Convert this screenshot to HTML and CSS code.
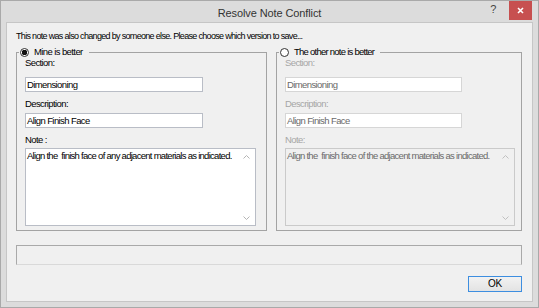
FILE: index.html
```html
<!DOCTYPE html>
<html>
<head>
<meta charset="utf-8">
<title>Resolve Note Conflict</title>
<link rel="stylesheet" href="styles.css">
</head>
<body>
<div class="window">
  <div class="titlebar">
    <div class="spacer"></div>
    <div class="title">Resolve Note Conflict</div>
    <div class="caption-btns">
      <span class="help">?</span>
      <span class="close"><svg width="7" height="7" viewBox="0 0 7 7"><path d="M1 1L6 6M6 1L1 6" stroke="#fff" stroke-width="1.6" fill="none"/></svg></span>
    </div>
  </div>
  <div class="client">
    <p class="intro">This note was also changed by someone else. Please choose which version to save...</p>
    <div class="versions">
      <fieldset class="group mine">
        <legend><span class="radio checked"></span>Mine is better</legend>
        <div class="group-body">
          <div class="label first">Section:</div>
          <div class="field first">Dimensioning</div>
          <div class="label">Description:</div>
          <div class="field">Align Finish Face</div>
          <div class="label">Note :</div>
          <div class="memo">
            <div class="memo-text">Align the  finish face of any adjacent materials as indicated.</div>
            <div class="scroll">
              <svg width="7" height="4" viewBox="0 0 7 4"><path d="M0.5 3.5L3.5 0.5L6.5 3.5" stroke="#b4b4b4" fill="none"/></svg>
              <svg width="7" height="4" viewBox="0 0 7 4"><path d="M0.5 0.5L3.5 3.5L6.5 0.5" stroke="#b4b4b4" fill="none"/></svg>
            </div>
          </div>
        </div>
      </fieldset>
      <fieldset class="group theirs">
        <legend><span class="radio"></span>The other note is better</legend>
        <div class="group-body">
          <div class="label first">Section:</div>
          <div class="field first">Dimensioning</div>
          <div class="label">Description:</div>
          <div class="field">Align Finish Face</div>
          <div class="label">Note:</div>
          <div class="memo">
            <div class="memo-text">Align the  finish face of the adjacent materials as indicated.</div>
            <div class="scroll">
              <svg width="7" height="4" viewBox="0 0 7 4"><path d="M0.5 3.5L3.5 0.5L6.5 3.5" stroke="#c0c0c0" fill="none"/></svg>
              <svg width="7" height="4" viewBox="0 0 7 4"><path d="M0.5 0.5L3.5 3.5L6.5 0.5" stroke="#c0c0c0" fill="none"/></svg>
            </div>
          </div>
        </div>
      </fieldset>
    </div>
    <div class="status"></div>
    <div class="actions"><button class="ok">OK</button></div>
  </div>
</div>
</body>
</html>
```

FILE: styles.css
```css
html, body {
  margin: 0;
  padding: 0;
  background: #ffffff;
}

body {
  font-family: "Liberation Sans", Arial, sans-serif;
  font-size: 9.5px;
  letter-spacing: -0.6px;
  color: #000;
}

.window {
  width: 539px;
  height: 308px;
  box-sizing: border-box;
  border: 1px solid #a9a9a9;
  background: #dcdcdc;
  display: flex;
  flex-direction: column;
}

.titlebar {
  height: 21px;
  display: grid;
  grid-template-columns: 1fr auto 1fr;
  align-items: start;
}

.title {
  padding-top: 5px;
  font-size: 11px;
  line-height: 15px;
  letter-spacing: -0.1px;
  color: #333;
}

.caption-btns {
  justify-self: end;
  display: flex;
  align-items: flex-start;
  margin-right: 6px;
}

.help {
  width: 16px;
  margin-right: 8px;
  padding-top: 1px;
  font-size: 11px;
  line-height: 15px;
  text-align: center;
  color: #444;
}

.close {
  width: 23px;
  height: 19px;
  background: #c75050;
  display: flex;
  align-items: center;
  justify-content: center;
}

.client {
  flex: 1;
  margin: 0 5px 5px 5px;
  border: 1px solid #c6c6c6;
  background: #f0f0f0;
  padding: 7px 10px 0 9px;
  display: flex;
  flex-direction: column;
}

.intro {
  margin: 0;
  font-size: 9px;
  letter-spacing: -0.68px;
  line-height: 12px;
}

.versions {
  margin-top: 5px;
  display: flex;
  gap: 9px;
}

.group {
  margin: 0;
  padding: 0;
  border: 1px solid #a3a3a3;
  min-width: 0;
  box-sizing: border-box;
}

.group.mine { width: 251px; }
.group.theirs { width: 246px; }

.group legend {
  margin-left: 2px;
  padding: 0 6px 0 1px;
  line-height: 10px;
  display: flex;
  align-items: center;
}

.theirs legend {
  letter-spacing: -0.75px;
}

.radio {
  width: 9px;
  height: 9px;
  box-sizing: border-box;
  border: 1px solid #333;
  border-radius: 50%;
  background: #fff;
  margin-right: 5px;
  display: inline-block;
}

.radio.checked {
  background: radial-gradient(circle, #111 0, #111 2.6px, #fff 3px);
}

.group-body {
  padding: 0 10px 4px 8px;
}

.theirs .group-body {
  padding-right: 6px;
}

.label {
  line-height: 12px;
  margin-top: 6px;
}

.label.first {
  margin-top: 0;
}

.field {
  height: 15px;
  box-sizing: border-box;
  border: 1px solid #b9bdc6;
  background: #fff;
  line-height: 13px;
  padding: 0 1px;
  margin-top: 3px;
  white-space: pre;
}

.field.first {
  margin-top: 8px;
}

.mine .field { width: 178px; }
.theirs .field { width: 177px; border-color: #d6d6d6; color: #6a6a6a; }
.theirs .label { color: #a6a6a6; }

.memo {
  margin-top: 2px;
  height: 78px;
  box-sizing: border-box;
  border: 1px solid #b9bdc6;
  background: #fff;
  display: flex;
}

.mine .memo { width: 231px; }
.theirs .memo { width: 230px; background: #f0f0f0; border-color: #cacaca; color: #6a6a6a; }

.memo-text {
  flex: 1;
  min-width: 0;
  padding: 1px 1px;
  line-height: 12px;
  letter-spacing: -0.72px;
  white-space: pre;
}

.scroll {
  width: 17px;
  flex: none;
  display: flex;
  flex-direction: column;
  align-items: center;
  justify-content: space-between;
  padding: 6px 0 5px;
}

.scroll svg {
  display: block;
}

.status {
  margin-top: 14px;
  height: 20px;
  box-sizing: border-box;
  border: 1px solid #a9a9a9;
  border-bottom-color: #d9d9d9;
}

.actions {
  margin-top: 11px;
  display: flex;
  justify-content: flex-end;
}

.ok {
  width: 54px;
  height: 16px;
  box-sizing: border-box;
  border: 1px solid #3d8ee0;
  background: linear-gradient(#f2f2f2, #e3e3e3);
  font-family: "Liberation Sans", Arial, sans-serif;
  font-size: 10px;
  letter-spacing: -0.3px;
  line-height: 14px;
  padding: 0;
  color: #000;
}
```
